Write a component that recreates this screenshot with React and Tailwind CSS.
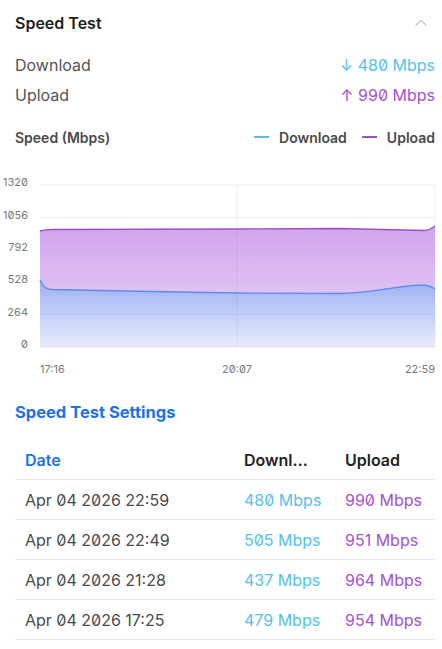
import React from 'react';

const rows = [
  { date: 'Apr 04 2026 22:59', down: 480, up: 990 },
  { date: 'Apr 04 2026 22:49', down: 505, up: 951 },
  { date: 'Apr 04 2026 21:28', down: 437, up: 964 },
  { date: 'Apr 04 2026 17:25', down: 479, up: 954 },
];

const yTicks = [
  { label: '1320', y: 185 },
  { label: '1056', y: 217.5 },
  { label: '792', y: 250 },
  { label: '528', y: 282 },
  { label: '264', y: 314.5 },
  { label: '0', y: 347 },
];

const downLine =
  'M40,280 C43,287 46,289 52,289.5 L150,291.5 L237,293 L340,293.5 C360,293 372,291 386,289 C400,287 412,285 422,285 C428,285 432,287 435,289';
const upLine =
  'M40,231 C44,230 46,229.5 52,229.5 L237,229 L340,228.5 L425,230.5 C430,230 432,228 435,226';

function SpeedChart() {
  return (
    <svg width="442" height="210" viewBox="0 170 442 210" className="block slashed-zero">
      <defs>
        <linearGradient id="upFill" x1="0" y1="226" x2="0" y2="347" gradientUnits="userSpaceOnUse">
          <stop offset="0" stopColor="#d2a4ee" />
          <stop offset="1" stopColor="#ecdaf8" />
        </linearGradient>
        <linearGradient id="downFill" x1="0" y1="282" x2="0" y2="347" gradientUnits="userSpaceOnUse">
          <stop offset="0" stopColor="#9db2f3" />
          <stop offset="1" stopColor="#e9ecfd" />
        </linearGradient>
      </defs>
      <path d={`${upLine} L435,347 L40,347 Z`} fill="url(#upFill)" />
      <path d={`${downLine} L435,347 L40,347 Z`} fill="url(#downFill)" />
      {yTicks.map((t) => (
        <line key={t.label} x1="40" x2="435" y1={t.y} y2={t.y} stroke="#9a9aa8" strokeOpacity="0.18" />
      ))}
      <line x1="237" x2="237" y1="185" y2="347" stroke="#9a9aa8" strokeOpacity="0.18" />
      <line x1="435" x2="435" y1="185" y2="347" stroke="#9a9aa8" strokeOpacity="0.12" />
      <path d={upLine} fill="none" stroke="#9a4fd0" strokeWidth="1.3" />
      <path d={downLine} fill="none" stroke="#5d8ceb" strokeWidth="1.3" />
      {yTicks.map((t) => (
        <text
          key={t.label}
          x="28"
          y={t.y + 1}
          textAnchor="end"
          fontSize="11"
          fill="#7a7a7a"
          style={{ fontFamily: 'Inter, sans-serif' }}
        >
          {t.label}
        </text>
      ))}
      <text x="40" y="373" fontSize="11" fill="#7a7a7a" style={{ fontFamily: 'Inter, sans-serif' }}>
        17:16
      </text>
      <text x="237" y="373" textAnchor="middle" fontSize="11" fill="#7a7a7a" style={{ fontFamily: 'Inter, sans-serif' }}>
        20:07
      </text>
      <text x="435" y="373" textAnchor="end" fontSize="11" fill="#7a7a7a" style={{ fontFamily: 'Inter, sans-serif' }}>
        22:59
      </text>
    </svg>
  );
}

export default function App() {
  return (
    <div className="w-[442px] h-[649px] bg-white font-['Inter',sans-serif] slashed-zero overflow-hidden">
      <div className="pl-[15px] pr-[7px]">
        <div className="h-[46px] flex items-center justify-between">
          <span className="text-[16px] font-semibold text-[#1e1e1e]">Speed Test</span>
          <svg width="14" height="10" viewBox="0 0 14 10" className="mr-[7px]">
            <path d="M1.5,7.5 L7,2.5 L12.5,7.5" fill="none" stroke="#a0a0a0" strokeWidth="1" />
          </svg>
        </div>
        <div className="mt-[4px]">
          <div className="h-[30px] flex items-center justify-between text-[16px]">
            <span className="text-[#555555]">Download</span>
            <span className="text-[#55c1ec]">↓ 480 Mbps</span>
          </div>
          <div className="h-[30px] flex items-center justify-between text-[16px]">
            <span className="text-[#555555]">Upload</span>
            <span className="text-[#a352d4]">↑ 990 Mbps</span>
          </div>
        </div>
        <div className="mt-[15px] h-[24px] flex items-center justify-between text-[14px] font-semibold text-[#4a4a4a]">
          <span>Speed (Mbps)</span>
          <div className="flex items-center">
            <span className="w-[15px] h-[2px] bg-[#55bde6] mr-[10px]" />
            <span>Download</span>
            <span className="w-[15px] h-[2px] bg-[#9a4fd0] ml-[15px] mr-[10px]" />
            <span>Upload</span>
          </div>
        </div>
      </div>
      <div className="mt-[21px]">
        <SpeedChart />
      </div>
      <div className="pl-[15px] pr-[7px]">
        <div className="mt-[20px] h-[24px] flex items-center text-[16.5px] font-bold text-[#1a73e8]">
          Speed Test Settings
        </div>
        <div className="mt-[16px] text-[16px]">
          <div className="grid grid-cols-[219px_101px_100px] h-[40px] items-center border-b border-[#e6e6e6] font-semibold">
            <span className="px-[10px] text-[#1a73e8]">Date</span>
            <span className="pl-[10px]">
              <span className="block w-[66px] truncate text-[#222222]">Download</span>
            </span>
            <span className="px-[10px] text-[#222222]">Upload</span>
          </div>
          {rows.map((r) => (
            <div
              key={r.date}
              className="grid grid-cols-[219px_101px_100px] h-[40px] items-center border-b border-[#e6e6e6]"
            >
              <span className="px-[10px] text-[#4a4a4a]">{r.date}</span>
              <span className="px-[10px] text-[#55c1ec]">{r.down} Mbps</span>
              <span className="px-[10px] text-[#a352d4]">{r.up} Mbps</span>
            </div>
          ))}
        </div>
      </div>
    </div>
  );
}
